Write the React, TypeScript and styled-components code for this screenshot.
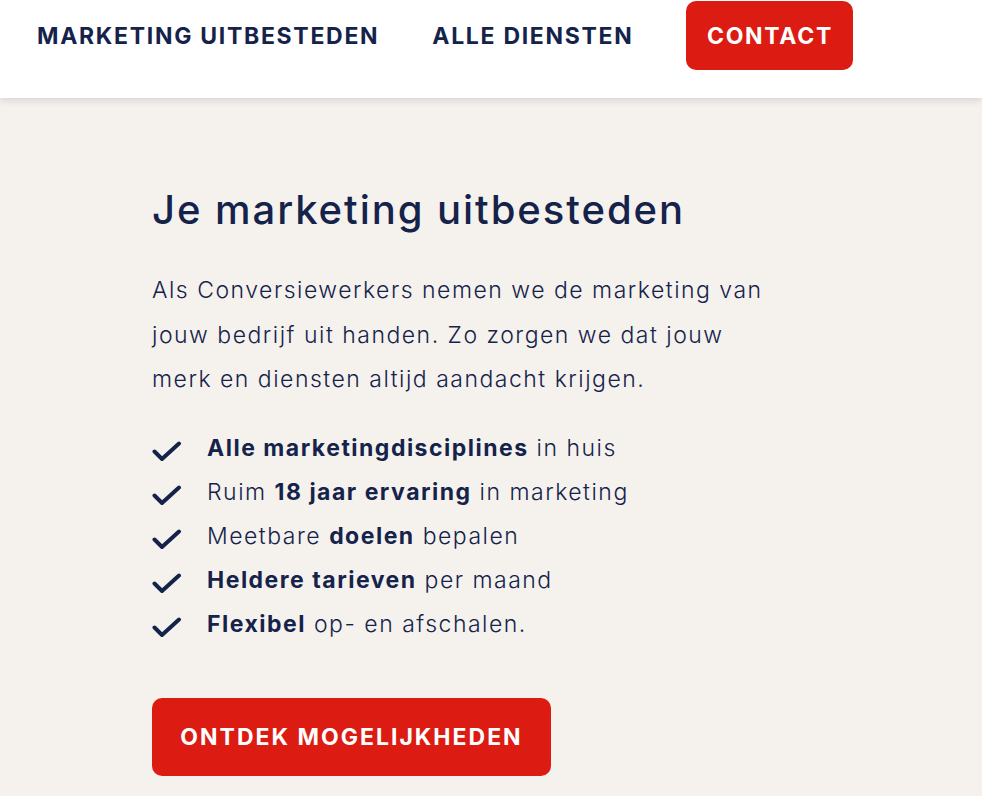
import React from 'react'
import styled, { createGlobalStyle } from 'styled-components'

const navy = '#15234b'
const red = '#dc1c13'

const GlobalStyle = createGlobalStyle`
  html, body {
    margin: 0;
    padding: 0;
    background: #f5f2ee;
    font-family: Inter, "Liberation Sans", sans-serif;
    color: ${navy};
  }
`

const Header = styled.header`
  position: relative;
  z-index: 2;
  height: 98px;
  background: #fff;
  box-shadow: 0 2px 8px rgba(0, 0, 0, 0.14);
  display: flex;
  align-items: flex-start;
  padding: 1px 0 0 37px;
  box-sizing: border-box;
`

const Nav = styled.nav`
  display: flex;
  align-items: center;
  height: 69px;
  gap: 53px;
`

const NavLink = styled.a`
  font-size: 23px;
  font-weight: 700;
  letter-spacing: 1.7px;
  text-transform: uppercase;
  color: ${navy};
  text-decoration: none;
  white-space: nowrap;
`

const CtaButton = styled.a<{ $big?: boolean }>`
  display: inline-flex;
  align-items: center;
  justify-content: center;
  box-sizing: border-box;
  height: ${(p) => (p.$big ? '78px' : '69px')};
  width: ${(p) => (p.$big ? '399px' : '167px')};
  background: ${red};
  color: #fff;
  border-radius: 10px;
  font-size: 23px;
  font-weight: 700;
  letter-spacing: ${(p) => (p.$big ? '2px' : '1.7px')};
  text-transform: uppercase;
  text-decoration: none;
  white-space: nowrap;
`

const Main = styled.main`
  padding: 84px 0 40px 152px;
`

const Title = styled.h1`
  margin: 0;
  font-size: 40px;
  font-weight: 500;
  line-height: 56px;
  letter-spacing: 1.95px;
`

const Intro = styled.p`
  margin: 30px 0 0;
  width: 625px;
  font-size: 23px;
  font-weight: 300;
  line-height: 44.5px;
  letter-spacing: 1.5px;
`

const List = styled.ul`
  list-style: none;
  margin: 24px 0 0;
  padding: 0;
`

const Item = styled.li`
  display: flex;
  align-items: center;
  height: 44px;
  font-size: 23px;
  font-weight: 300;
  letter-spacing: 1.5px;
  white-space: nowrap;

  b {
    font-weight: 700;
  }
`

const Check = styled.svg`
  width: 30px;
  height: 22px;
  margin: 8px 25px 0 0;
  flex-shrink: 0;
`

const ButtonRow = styled.div`
  margin-top: 52px;
`

const CheckIcon = () => (
  <Check viewBox="0 0 30 22">
    <path d="M2.5 10.5 L10 18 L27 2.5" fill="none" stroke={navy} strokeWidth="4" strokeLinecap="round" strokeLinejoin="round" />
  </Check>
)

const points: React.ReactNode[] = [
  <>
    <b>Alle marketingdisciplines</b> in huis
  </>,
  <>
    Ruim <b>18 jaar ervaring</b> in marketing
  </>,
  <>
    Meetbare <b>doelen</b> bepalen
  </>,
  <>
    <b>Heldere tarieven</b> per maand
  </>,
  <>
    <b>Flexibel</b> op- en afschalen.
  </>,
]

const App = (): JSX.Element => {
  return (
    <>
      <GlobalStyle />
      <Header>
        <Nav>
          <NavLink href="#">Marketing uitbesteden</NavLink>
          <NavLink href="#">Alle diensten</NavLink>
          <CtaButton href="#">Contact</CtaButton>
        </Nav>
      </Header>
      <Main>
        <Title>Je marketing uitbesteden</Title>
        <Intro>
          Als Conversiewerkers nemen we de marketing van jouw bedrijf uit handen. Zo zorgen we dat jouw merk en
          diensten altijd aandacht krijgen.
        </Intro>
        <List>
          {points.map((point, index) => (
            <Item key={index}>
              <CheckIcon />
              <span>{point}</span>
            </Item>
          ))}
        </List>
        <ButtonRow>
          <CtaButton $big href="#">
            Ontdek mogelijkheden
          </CtaButton>
        </ButtonRow>
      </Main>
    </>
  )
}

export default App
